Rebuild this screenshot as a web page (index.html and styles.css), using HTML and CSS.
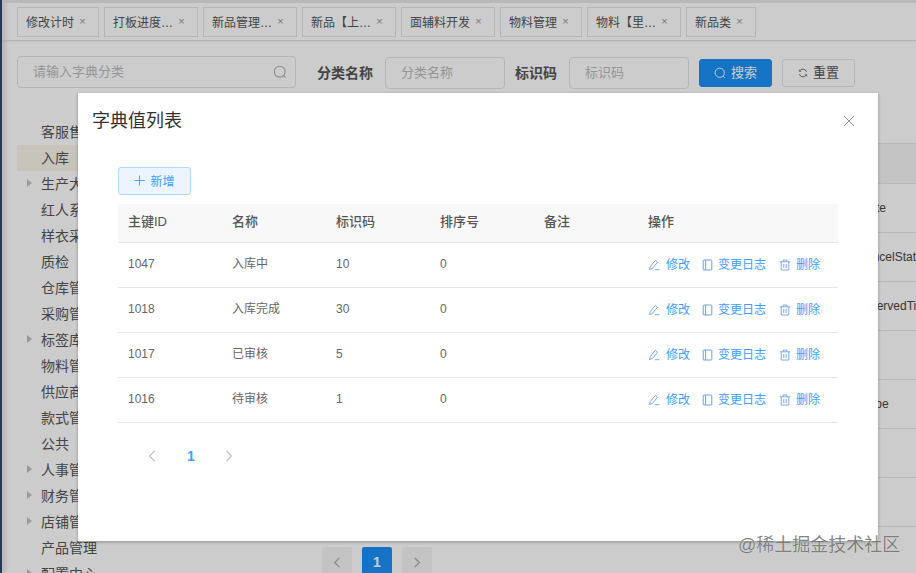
FILE: index.html
```html
<!DOCTYPE html>
<html lang="zh-CN">
<head>
<meta charset="utf-8">
<title>字典值列表</title>
<link rel="stylesheet" href="styles.css">
</head>
<body>
<svg class="defs" width="0" height="0" aria-hidden="true">
  <symbol id="i-search" viewBox="0 0 14 14"><circle cx="6.7" cy="6.7" r="5.4" fill="none" stroke="currentColor" stroke-width="1.1"/><path d="M10.6 10.6L12.6 12.6" fill="none" stroke="currentColor" stroke-width="1.1"/></symbol>
  <symbol id="i-refresh" viewBox="0 0 12 12"><path d="M10.3 4.6A4.6 4.6 0 0 0 2 3.6M1.7 7.4A4.6 4.6 0 0 0 10 8.4" fill="none" stroke="currentColor" stroke-width="1"/><path d="M1.6 1.8V4H3.8M10.4 10.2V8H8.2" fill="none" stroke="currentColor" stroke-width=".8"/></symbol>
  <symbol id="i-edit" viewBox="0 0 12 12"><path d="M1.6 10.6L2.2 7.6L7.4 1.4L9.6 3.2L4.4 9.5Z" fill="none" stroke="currentColor" stroke-width=".9"/><path d="M6.8 10.7H11.4" fill="none" stroke="currentColor" stroke-width=".9"/></symbol>
  <symbol id="i-book" viewBox="0 0 11 12"><rect x="1.2" y="1" width="8.6" height="10" rx=".6" fill="none" stroke="currentColor" stroke-width="1"/><path d="M3.6 1V11" fill="none" stroke="currentColor" stroke-width="1"/></symbol>
  <symbol id="i-trash" viewBox="0 0 12 12"><path d="M.8 2.8H11.2M4.2 2.6V1H7.8V2.6M2.2 2.8V11H9.8V2.8M4.8 5V9M7.2 5V9" fill="none" stroke="currentColor" stroke-width=".9"/></symbol>
  <symbol id="i-x" viewBox="0 0 12 12"><path d="M1 1L11 11M11 1L1 11" fill="none" stroke="currentColor" stroke-width="1"/></symbol>
  <symbol id="i-prev" viewBox="0 0 8 12"><path d="M6.5 1L1.5 6L6.5 11" fill="none" stroke="currentColor" stroke-width="1.3"/></symbol>
  <symbol id="i-next" viewBox="0 0 8 12"><path d="M1.5 1L6.5 6L1.5 11" fill="none" stroke="currentColor" stroke-width="1.3"/></symbol>
  <symbol id="i-plus" viewBox="0 0 12 12"><path d="M6 .5V11.5M.5 6H11.5" fill="none" stroke="currentColor" stroke-width="1"/></symbol>
</svg>

<div class="app">
  <div class="rail"></div>
  <div class="main">
    <nav class="tabs">
      <div class="tab tab-82"><span class="tab-name">修改计时</span><span class="tab-x">×</span></div>
      <div class="tab"><span class="tab-name">打板进度…</span><span class="tab-x">×</span></div>
      <div class="tab"><span class="tab-name">新品管理…</span><span class="tab-x">×</span></div>
      <div class="tab"><span class="tab-name">新品【上…</span><span class="tab-x">×</span></div>
      <div class="tab"><span class="tab-name">面辅料开发</span><span class="tab-x">×</span></div>
      <div class="tab tab-82"><span class="tab-name">物料管理</span><span class="tab-x">×</span></div>
      <div class="tab"><span class="tab-name">物料【里…</span><span class="tab-x">×</span></div>
      <div class="tab tab-70"><span class="tab-name">新品类</span><span class="tab-x">×</span></div>
    </nav>
    <div class="content">
      <aside class="side">
        <div class="side-search"><span class="ph">请输入字典分类</span><svg class="side-search-icon"><use href="#i-search"/></svg></div>
        <ul class="tree">
          <li class="node">客服售后</li>
          <li class="node node-on">入库</li>
          <li class="node node-arrow">生产大货</li>
          <li class="node">红人系统</li>
          <li class="node">样衣采购</li>
          <li class="node">质检</li>
          <li class="node">仓库管理</li>
          <li class="node">采购管理</li>
          <li class="node node-arrow">标签库</li>
          <li class="node">物料管理</li>
          <li class="node">供应商管理</li>
          <li class="node">款式管理</li>
          <li class="node">公共</li>
          <li class="node node-arrow">人事管理</li>
          <li class="node node-arrow">财务管理</li>
          <li class="node node-arrow">店铺管理</li>
          <li class="node">产品管理</li>
          <li class="node node-arrow">配置中心</li>
        </ul>
      </aside>
      <section class="panel">
        <form class="filters">
          <label class="f-label">分类名称</label>
          <div class="f-input"><span class="ph">分类名称</span></div>
          <label class="f-label f-label-code">标识码</label>
          <div class="f-input"><span class="ph">标识码</span></div>
          <div class="btn btn-primary"><svg class="btn-icon"><use href="#i-search"/></svg>搜索</div>
          <div class="btn"><svg class="btn-icon btn-icon-sm"><use href="#i-refresh"/></svg>重置</div>
        </form>
        <div class="bg-table">
          <div class="bg-head"></div>
          <div class="bg-row"><span class="bg-cell">state</span></div>
          <div class="bg-row"><span class="bg-cell">cancelStatus</span></div>
          <div class="bg-row"><span class="bg-cell">reservedTime</span></div>
          <div class="bg-row"></div>
          <div class="bg-row"><span class="bg-cell">stype</span></div>
          <div class="bg-row"></div>
          <div class="bg-row"></div>
        </div>
        <div class="bg-pager">
          <span class="bg-page"><svg class="bg-arrow"><use href="#i-prev"/></svg></span>
          <span class="bg-page bg-page-on">1</span>
          <span class="bg-page"><svg class="bg-arrow"><use href="#i-next"/></svg></span>
        </div>
      </section>
    </div>
  </div>
</div>

<div class="mask"></div>

<div class="dialog">
  <header class="dialog-head">
    <h2 class="dialog-title">字典值列表</h2>
    <svg class="dialog-close"><use href="#i-x"/></svg>
  </header>
  <div class="dialog-body">
    <div class="add"><svg class="add-icon"><use href="#i-plus"/></svg>新增</div>
    <table class="dict">
      <thead>
        <tr><th class="col">主键ID</th><th class="col">名称</th><th class="col">标识码</th><th class="col">排序号</th><th class="col">备注</th><th>操作</th></tr>
      </thead>
      <tbody>
        <tr><td>1047</td><td>入库中</td><td>10</td><td>0</td><td></td><td class="ops"><span class="op op-edit"><svg class="op-icon"><use href="#i-edit"/></svg>修改</span><span class="op op-log"><svg class="op-icon op-icon-book"><use href="#i-book"/></svg>变更日志</span><span class="op"><svg class="op-icon"><use href="#i-trash"/></svg>删除</span></td></tr>
        <tr><td>1018</td><td>入库完成</td><td>30</td><td>0</td><td></td><td class="ops"><span class="op op-edit"><svg class="op-icon"><use href="#i-edit"/></svg>修改</span><span class="op op-log"><svg class="op-icon op-icon-book"><use href="#i-book"/></svg>变更日志</span><span class="op"><svg class="op-icon"><use href="#i-trash"/></svg>删除</span></td></tr>
        <tr><td>1017</td><td>已审核</td><td>5</td><td>0</td><td></td><td class="ops"><span class="op op-edit"><svg class="op-icon"><use href="#i-edit"/></svg>修改</span><span class="op op-log"><svg class="op-icon op-icon-book"><use href="#i-book"/></svg>变更日志</span><span class="op"><svg class="op-icon"><use href="#i-trash"/></svg>删除</span></td></tr>
        <tr><td>1016</td><td>待审核</td><td>1</td><td>0</td><td></td><td class="ops"><span class="op op-edit"><svg class="op-icon"><use href="#i-edit"/></svg>修改</span><span class="op op-log"><svg class="op-icon op-icon-book"><use href="#i-book"/></svg>变更日志</span><span class="op"><svg class="op-icon"><use href="#i-trash"/></svg>删除</span></td></tr>
      </tbody>
    </table>
    <div class="pager">
      <svg class="pager-arrow"><use href="#i-prev"/></svg>
      <span class="pager-num">1</span>
      <svg class="pager-arrow"><use href="#i-next"/></svg>
    </div>
  </div>
</div>

<div class="watermark">@稀土掘金技术社区</div>
</body>
</html>
```

FILE: styles.css
```css
* { box-sizing: border-box; }
html, body { margin: 0; height: 100%; }
body {
  width: 916px;
  height: 573px;
  overflow: hidden;
  position: relative;
  background: #fff;
  color: #333;
  font-family: "Liberation Sans", "Noto Sans CJK SC", sans-serif;
}
.defs { position: absolute; }
svg { display: block; }

.app { display: flex; height: 573px; overflow: hidden; }
.rail { width: 2px; flex: none; background: #30456f; box-shadow: 2px 0 5px rgba(0, 0, 0, .3); }
.main { flex: 1; min-width: 0; border-top: 3px solid #e6e6e6; }

.tabs {
  display: flex;
  gap: 5px;
  height: 38px;
  padding: 4px 0 0 15px;
  border-bottom: 1px solid #e2e2e2;
  box-shadow: 0 1px 2px rgba(0, 0, 0, .05);
}
.tab {
  display: flex;
  align-items: center;
  justify-content: space-between;
  width: 94px;
  height: 30px;
  padding: 0 11px 2px 8px;
  border: 1px solid #e4e4e4;
  font-size: 12px;
  white-space: nowrap;
  background: #fff;
}
.tab-82 { width: 82px; }
.tab-70 { width: 70px; }
.tab-name { color: #555; }
.tab-x { color: #999; font-size: 11px; width: 9px; text-align: center; }

.content { display: flex; padding-left: 15px; }
.side { width: 279px; flex: none; padding-top: 15px; }
.side-search {
  display: flex;
  align-items: center;
  justify-content: space-between;
  height: 32px;
  padding: 0 8px 3px 15px;
  border: 1px solid #e4e4e4;
  border-radius: 4px;
}
.side-search-icon { width: 14px; height: 14px; color: #b0b0b0; position: relative; top: 1px; }
.ph { font-size: 13px; color: #bbb; }

.tree { list-style: none; margin: 31px 0 0; padding: 0; }
.node {
  position: relative;
  height: 26px;
  padding-left: 24px;
  font-size: 14px;
  line-height: 26px;
  color: #555;
  white-space: nowrap;
}
.node-on { background: #f9f5ea; }
.node-arrow::before {
  content: "";
  position: absolute;
  left: 10px;
  top: 8px;
  border-left: 5px solid #c0c0c0;
  border-top: 4px solid transparent;
  border-bottom: 4px solid transparent;
}

.panel { flex: 1; min-width: 0; margin-left: 21px; overflow: hidden; }
.filters { display: flex; align-items: center; height: 32px; margin-top: 16px; }
.f-label { font-size: 14px; font-weight: 700; color: #555; white-space: nowrap; width: 68px; padding-bottom: 2px; }
.f-label-code { margin-left: 10px; width: 54px; }
.f-input {
  display: flex;
  align-items: center;
  width: 120px;
  height: 32px;
  padding: 0 15px 3px;
  border: 1px solid #e4e4e4;
  border-radius: 4px;
}
.btn {
  display: flex;
  align-items: center;
  justify-content: center;
  gap: 5px;
  width: 73px;
  height: 28px;
  margin-left: 10px;
  padding-bottom: 3px;
  border: 1px solid #e4e4e4;
  border-radius: 3px;
  font-size: 13px;
  color: #555;
  background: #fff;
}
.btn-primary { background: #1a90f5; border-color: #1a90f5; color: #fff; }
.btn-icon { width: 12px; height: 12px; position: relative; top: 1px; }
.btn-icon-sm { width: 10px; height: 10px; }

.bg-table { margin-top: 54px; width: 100%; }
.bg-head { height: 41px; background: #f5f5f5; border-top: 1px solid #e6e6e6; border-bottom: 1px solid #e6e6e6; }
.bg-row {
  display: flex;
  align-items: center;
  height: 49px;
  padding-left: 543px;
  border-bottom: 1px solid #e6e6e6;
  font-size: 12px;
  color: #444;
  white-space: nowrap;
  overflow: hidden;
}
.bg-pager { display: flex; gap: 10px; margin: 20px 0 0 5px; }
.bg-page {
  display: flex;
  align-items: center;
  justify-content: center;
  width: 30px;
  height: 30px;
  background: #f4f4f5;
  border-radius: 2px;
  color: #aaa;
  font-size: 14px;
  font-weight: 700;
}
.bg-page-on { background: #1a90f5; color: #fff; }
.bg-arrow { width: 8px; height: 11px; }

.mask { position: absolute; inset: 0; background: rgba(0, 0, 0, .2); }

.dialog {
  position: absolute;
  left: 78px;
  top: 93px;
  width: 800px;
  height: 448px;
  background: #fff;
  box-shadow: 0 1px 3px rgba(0, 0, 0, .3);
}
.dialog-head { display: flex; align-items: center; justify-content: space-between; height: 54px; padding: 0 23px 2px 15px; }
.dialog-title { margin: 0; font-size: 18px; font-weight: 400; color: #303133; margin-left: -1px; }
.dialog-close { width: 12px; height: 12px; color: #909399; position: relative; top: 2px; }
.dialog-body { padding: 20px 40px 0; }
.add {
  display: flex;
  align-items: center;
  justify-content: center;
  gap: 5px;
  width: 73px;
  height: 28px;
  padding-bottom: 1px;
  border: 1px solid #b3d8ff;
  border-radius: 3px;
  background: #ecf5ff;
  color: #409eff;
  font-size: 12px;
}
.add-icon { width: 11px; height: 11px; }

.dict { width: 720px; margin-top: 9px; border-collapse: collapse; table-layout: fixed; }
.dict th {
  height: 38px;
  padding: 0 10px 2px;
  background: #f8f8f9;
  border-bottom: 1px solid #e6e6e6;
  font-size: 13px;
  font-weight: 500;
  line-height: 16px;
  text-align: left;
  color: #555;
}
.dict .col { width: 104px; }
.dict td {
  height: 45px;
  padding: 0 10px 1px;
  border-bottom: 1px solid #e6e6e6;
  font-size: 12px;
  line-height: 16px;
  color: #666;
}
.dict .ops { white-space: nowrap; padding-bottom: 0; padding-top: 1px; }
.op { display: inline-flex; align-items: center; gap: 5px; color: #409eff; vertical-align: middle; }
.op-edit { gap: 6px; margin-right: 12px; }
.op-log { margin-right: 13px; }
.op-icon { width: 12px; height: 12px; color: #6f9fe0; }
.op-icon-book { width: 11px; }

.pager { display: flex; align-items: center; gap: 30px; margin: 25px 0 0 30px; }
.pager-arrow { width: 8px; height: 12px; color: #c0c4cc; }
.pager-num { font-size: 14px; font-weight: 700; color: #409eff; width: 8px; text-align: center; margin-left: 1px; }

.watermark {
  position: absolute;
  left: 738px;
  top: 533px;
  font-size: 18px;
  line-height: 24px;
  color: rgba(90, 90, 90, .75);
  text-shadow: 0 0 1px rgba(255, 255, 255, .7);
  white-space: nowrap;
}
```
